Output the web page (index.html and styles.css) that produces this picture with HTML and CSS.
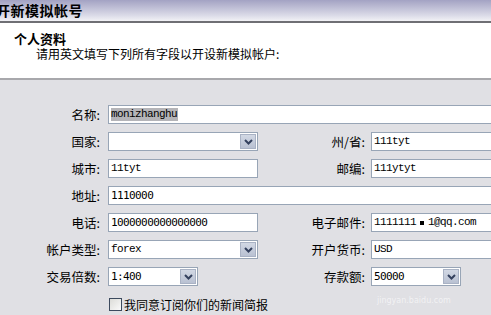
FILE: index.html
```html
<!DOCTYPE html>
<html lang="zh-CN">
<head>
    <meta charset="UTF-8">
    <title>开新模拟帐号</title>
    <link rel="stylesheet" href="styles.css">
</head>
<body>
    <div class="titlebar"><span class="title">开新模拟帐号</span></div>

    <div class="header">
        <div class="section-title">个人资料</div>
        <div class="section-desc">请用英文填写下列所有字段以开设新模拟帐户:</div>
    </div>

    <form class="form">
        <label class="lbl">名称:</label>
        <div class="field wide serif"><span class="picked">monizhanghu</span></div>

        <label class="lbl">国家:</label>
        <div class="field select"><span class="val"></span><span class="drop"><svg width="9" height="6" viewBox="0 0 9 6"><path d="M1 1 L4.5 4.5 L8 1" fill="none" stroke="#34415e" stroke-width="2"/></svg></span></div>
        <label class="lbl lbl-r">州/省:</label>
        <div class="field serif">111tyt</div>

        <label class="lbl">城市:</label>
        <div class="field serif">11tyt</div>
        <label class="lbl lbl-r">邮编:</label>
        <div class="field serif">111ytyt</div>

        <label class="lbl">地址:</label>
        <div class="field wide">1110000</div>

        <label class="lbl">电话:</label>
        <div class="field">1000000000000000</div>
        <label class="lbl lbl-r">电子邮件:</label>
        <div class="field serif">1111111<span class="dot"></span>1@qq.com</div>

        <label class="lbl">帐户类型:</label>
        <div class="field select serif"><span class="val">forex</span><span class="drop"><svg width="9" height="6" viewBox="0 0 9 6"><path d="M1 1 L4.5 4.5 L8 1" fill="none" stroke="#34415e" stroke-width="2"/></svg></span></div>
        <label class="lbl lbl-r">开户货币:</label>
        <div class="field serif">USD</div>

        <label class="lbl">交易倍数:</label>
        <div class="field select short"><span class="val">1:400</span><span class="drop"><svg width="9" height="6" viewBox="0 0 9 6"><path d="M1 1 L4.5 4.5 L8 1" fill="none" stroke="#34415e" stroke-width="2"/></svg></span></div>
        <label class="lbl lbl-r">存款额:</label>
        <div class="field select short"><span class="val">50000</span><span class="drop"><svg width="9" height="6" viewBox="0 0 9 6"><path d="M1 1 L4.5 4.5 L8 1" fill="none" stroke="#34415e" stroke-width="2"/></svg></span></div>

        <div class="agree">
            <span class="check"></span>
            <span>我同意订阅你们的新闻简报</span>
        </div>
    </form>

    <div class="watermark">
        <div class="wm-url">jingyan.baidu.com</div>
    </div>
</body>
</html>
```

FILE: styles.css
```css
body {
    margin: 0;
    width: 491px;
    height: 315px;
    overflow: hidden;
    position: relative;
    background: #e0e0e4;
    font-family: "Noto Sans CJK SC", "Noto Sans", sans-serif;
    font-size: 12px;
    color: #000;
}

.titlebar {
    height: 21px;
    background: linear-gradient(to bottom, #a3a2c3, #d8d8e6 70%, #f2f2f6);
    border-bottom: 2px solid #6f6f74;
    overflow: hidden;
}
.title {
    display: block;
    margin-left: -4px;
    font-size: 14px;
    font-weight: bold;
    line-height: 20px;
    letter-spacing: 0.5px;
}

.header {
    height: 57px;
    background: #fff;
    border-bottom: 2px solid #a8a8ac;
    padding-left: 14px;
    box-sizing: border-box;
    padding-top: 9px;
}
.section-title {
    font-size: 13px;
    font-weight: bold;
    line-height: 14px;
}
.section-desc {
    margin-left: 22px;
    margin-top: 1px;
    line-height: 14px;
    font-size: 12px;
}

.form {
    margin: 0;
    padding-top: 25px;
    width: 521px;
    display: grid;
    grid-template-columns: 108px 150px 113px 150px;
    grid-auto-rows: 19px;
    row-gap: 8px;
}

.lbl {
    text-align: right;
    padding-right: 8px;
    line-height: 19px;
    font-size: 12.5px;
}
.lbl-r {
    padding-right: 6px;
}

.field {
    height: 19px;
    box-sizing: border-box;
    background: #fff;
    border: 1px solid #98a5b6;
    padding-left: 2px;
    font-family: "DejaVu Sans Mono", monospace;
    font-size: 11px;
    letter-spacing: -0.6px;
    line-height: 17px;
    white-space: nowrap;
    overflow: hidden;
    display: flex;
    align-items: center;
}
.field.serif {
    font-family: "Liberation Mono", monospace;
    font-size: 11px;
    letter-spacing: -0.6px;
}
.wide {
    grid-column: 2 / 5;
}
.short {
    width: 90px;
}

.picked {
    background: #b4b4b8;
    line-height: 13px;
    padding-right: 1px;
}

.dot {
    display: inline-block;
    width: 4px;
    height: 4px;
    background: #000;
    margin: 0 4px;
}

.select {
    justify-content: space-between;
    padding-right: 1px;
}
.drop {
    width: 16px;
    height: 15px;
    box-sizing: border-box;
    background: linear-gradient(to bottom, #d2d8e4, #b9c1d2);
    border: 1px solid #a9b2c4;
    display: flex;
    align-items: center;
    justify-content: center;
}

.agree {
    grid-column: 2 / 5;
    display: flex;
    align-items: center;
    gap: 2px;
    margin-top: 2px;
    font-size: 12px;
    line-height: 19px;
}
.check {
    width: 13px;
    height: 13px;
    box-sizing: border-box;
    border: 1px solid #3c4a5e;
    background: linear-gradient(135deg, #dcdcd8, #fafafa);
    margin-left: 1px;
}

.watermark {
    position: absolute;
    left: 377px;
    top: 296px;
    pointer-events: none;
}
.wm-url {
    font-family: "DejaVu Sans", sans-serif;
    font-size: 8px;
    line-height: 9px;
    color: rgba(255, 255, 255, 0.6);
}
```
